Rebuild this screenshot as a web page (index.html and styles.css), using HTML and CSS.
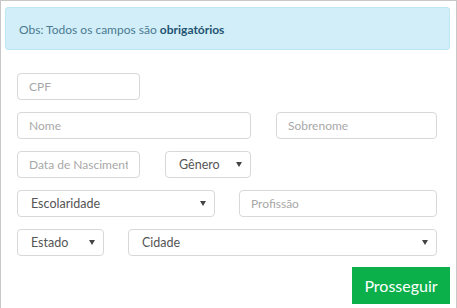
FILE: index.html
```html
<!DOCTYPE html>
<html lang="pt-BR">
<head>
    <meta charset="UTF-8">
    <meta name="viewport" content="width=device-width, initial-scale=1.0">
    <title>Cadastro</title>
    <link rel="stylesheet" href="styles.css">
</head>
<body>
    <div class="frame">
        <div class="alert">Obs: Todos os campos são <strong>obrigatórios</strong></div>

        <form class="form">
            <div class="row">
                <input class="field w-cpf" type="text" placeholder="CPF">
            </div>
            <div class="row">
                <input class="field w-nome" type="text" placeholder="Nome">
                <input class="field w-sobrenome gap-25" type="text" placeholder="Sobrenome">
            </div>
            <div class="row">
                <input class="field w-cpf" type="text" placeholder="Data de Nascimento">
                <div class="select w-genero gap-25"><span>Gênero</span><i class="caret"></i></div>
            </div>
            <div class="row">
                <div class="select w-escola"><span>Escolaridade</span><i class="caret"></i></div>
                <input class="field w-escola gap-24" type="text" placeholder="Profissão">
            </div>
            <div class="row">
                <div class="select w-estado"><span>Estado</span><i class="caret"></i></div>
                <div class="select w-cidade gap-24"><span>Cidade</span><i class="caret"></i></div>
            </div>
            <div class="actions">
                <button type="button" class="btn">Prosseguir</button>
            </div>
        </form>
    </div>
</body>
</html>
```

FILE: styles.css
```css
html, body {
    margin: 0;
    padding: 0;
    background: #fff;
}
body {
    font-family: Lato, "Open Sans", sans-serif;
}
.frame {
    width: 455px;
    height: 306px;
    border: 1px solid #c8c8c8;
    overflow: hidden;
    padding-top: 6px;
    box-sizing: content-box;
}
.alert {
    margin: 0 6px 0 4px;
    height: 43px;
    box-sizing: border-box;
    background-color: #d2eef8;
    border: 1px solid #bfe7f3;
    border-radius: 3px;
    color: #4a7a92;
    font-size: 12px;
    padding: 14px 0 0 13px;
    line-height: 15px;
}
.alert strong {
    color: #1f5472;
    font-weight: bold;
}
.form {
    padding: 23px 0 0 16px;
}
.row {
    display: flex;
    margin-bottom: 12px;
}
.field, .select {
    height: 27px;
    box-sizing: border-box;
    border: 1px solid #d8d8d8;
    border-radius: 4px;
    background: #fff;
    font-family: Lato, "Open Sans", sans-serif;
    font-size: 12px;
    margin: 0;
}
.field {
    padding: 0 11px;
    color: #555;
    outline: none;
}
.field::placeholder {
    color: #a8a8a8;
}
.select {
    display: flex;
    align-items: center;
    justify-content: space-between;
    padding: 0 8px 0 13px;
    color: #555;
    font-size: 12.5px;
}
.caret {
    width: 0;
    height: 0;
    border-left: 3px solid transparent;
    border-right: 3px solid transparent;
    border-top: 5px solid #444;
}
.w-cpf { width: 123px; }
.w-nome { width: 234px; }
.w-sobrenome { width: 161px; }
.w-genero { width: 86px; }
.w-escola { width: 198px; }
.w-estado { width: 87px; }
.w-cidade { width: 309px; }
.gap-25 { margin-left: 25px; }
.gap-24 { margin-left: 24px; }
.actions {
    display: flex;
    justify-content: flex-end;
    padding-right: 6px;
    margin-top: -1px;
}
.btn {
    width: 98px;
    height: 37px;
    background-color: #0bb04b;
    color: #fff;
    border: none;
    font-family: Lato, "Open Sans", sans-serif;
    font-size: 16px;
    cursor: pointer;
}
```
